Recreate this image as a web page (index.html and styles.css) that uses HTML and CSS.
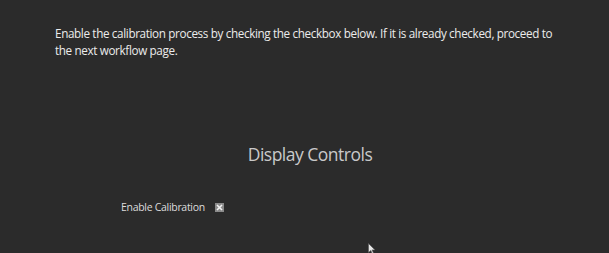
FILE: index.html
```html
<!DOCTYPE html>
<html lang="en">
<head>
    <meta charset="UTF-8">
    <title>Display Controls</title>
    <link rel="stylesheet" href="styles.css">
</head>
<body>
    <div class="page">
        <p class="intro">Enable the calibration process by checking the checkbox below. If it is already checked, proceed to the next workflow page.</p>

        <h2 class="section-title">Display Controls</h2>

        <div class="control-row">
            <span class="control-label">Enable Calibration</span>
            <span class="check-box checked">
                <svg width="7" height="7" viewBox="0 0 7 7">
                    <path d="M1 1 L6 6 M6 1 L1 6" stroke="#f2f2f2" stroke-width="1.6" fill="none"/>
                </svg>
            </span>
        </div>

        <div class="cursor-row">
            <svg class="cursor" width="8" height="12" viewBox="0 0 8 12">
                <path d="M0.5 0.5 L0.5 9.5 L2.8 7.4 L4.3 11 L5.6 10.4 L4.1 6.9 L7 6.9 Z" fill="#e8e8e8" stroke="#555" stroke-width="0.6"/>
            </svg>
        </div>
    </div>
</body>
</html>
```

FILE: styles.css
```css
html, body {
    margin: 0;
    padding: 0;
}

body {
    background-color: #2b2b2b;
    color: #e6e6e6;
    font-family: "Open Sans", "Noto Sans", sans-serif;
    width: 609px;
    height: 253px;
    overflow: hidden;
}

.page {
    padding: 25px 0 0 55px;
}

.intro {
    margin: 0;
    width: 508px;
    font-size: 11.7px;
    line-height: 17px;
    letter-spacing: -0.36px;
    color: #ececec;
}

.section-title {
    margin: 83px 0 0 0;
    width: 510px;
    text-align: center;
    font-weight: normal;
    font-size: 17.5px;
    line-height: 24px;
    letter-spacing: -0.5px;
    color: #c9c9c9;
}

.control-row {
    display: flex;
    align-items: center;
    margin: 34px 0 0 66px;
}

.control-label {
    font-size: 10.5px;
    letter-spacing: -0.3px;
    color: #dcdcdc;
}

.check-box {
    display: flex;
    align-items: center;
    justify-content: center;
    width: 9px;
    height: 9px;
    margin-left: 10px;
    background-color: #8a8a8a;
}

.cursor-row {
    margin: 29px 0 0 313px;
}

.cursor {
    display: block;
}
```
